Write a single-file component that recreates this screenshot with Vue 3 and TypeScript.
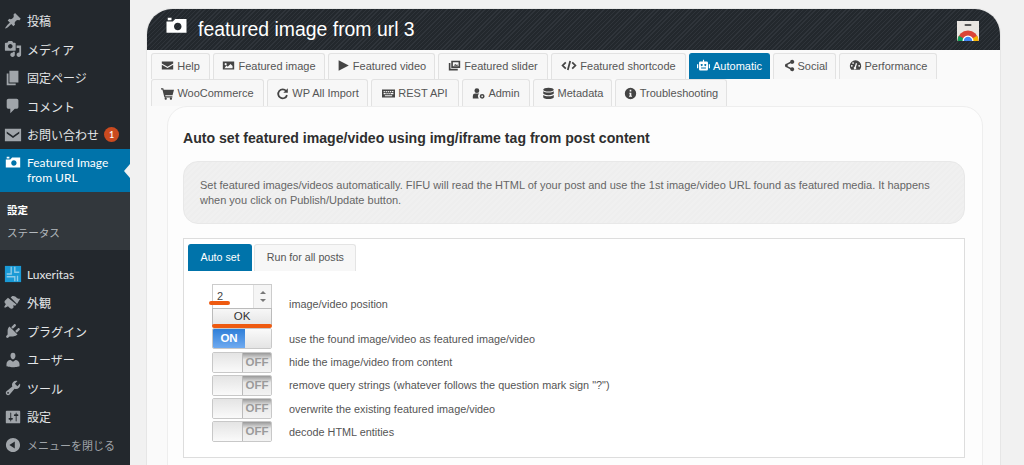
<script setup lang="ts">
interface MenuItem { label: string; icon: string; bold?: boolean }

const wp: Record<string, string> = {
  post: 'M10.44 3.02l1.82-1.82 6.36 6.35-1.83 1.82c-1.05-.68-2.48-.57-3.41.36l-.75.75c-.92.93-1.04 2.35-.35 3.41l-1.83 1.82-2.41-2.41-2.8 2.79c-.42.42-3.38 2.71-3.8 2.29s1.86-3.39 2.28-3.81l2.79-2.79L4.1 9.36l1.83-1.82c1.05.69 2.48.57 3.4-.36l.75-.75c.93-.92 1.05-2.35.36-3.41z',
  media: 'M13 11V4c0-.55-.45-1-1-1h-1.67L9 1H5L3.67 3H2c-.55 0-1 .45-1 1v7c0 .55.45 1 1 1h10c.55 0 1-.45 1-1zM7 4.5c1.38 0 2.5 1.12 2.5 2.5S8.38 9.5 7 9.5 4.5 8.38 4.5 7 5.62 4.5 7 4.5zM14 6h5v10.5c0 1.38-1.12 2.5-2.5 2.5S14 17.88 14 16.5s1.12-2.5 2.5-2.5c.17 0 .34.02.5.05V9h-3V6zm-4 8.05V13h2v3.5c0 1.38-1.12 2.5-2.5 2.5S7 17.88 7 16.5 8.12 14 9.5 14c.17 0 .34.02.5.05z',
  page: 'M6 15V2h10v13H6zm-1 1h8v2H3V5h2v11z',
  comment: 'M5 2h9c1.1 0 2 .9 2 2v7c0 1.1-.9 2-2 2h-2l-5 5v-5H5c-1.1 0-2-.9-2-2V4c0-1.1.9-2 2-2z',
  mail: 'M1 3h18v14H1zM3 6l7 5 7-5v2.400l-7 5-7-5z',
  camera: 'M6 5V3H3v2h3zm12 10V4H9L7 6H2v9h16zm-7-8c1.66 0 3 1.34 3 3s-1.34 3-3 3-3-1.34-3-3 1.34-3 3-3z',
  brush: 'M14.48 11.06 7.41 3.99l1.5-1.5c.5-.56 2.3-.47 3.51.32 1.21.8 1.43 1.28 2.91 2.1.9.5 1.9.4 2.67.3zM13.8 11.7l-1.4 1.4-2.2-.6.6 2.2-1.4 1.400c-1 .5-2 .3-3-.6l-2-2-3.300 1.900-.9-.9 1.900-3.300-1-1c-.5-.6-.7-2.100-.1-2.800l3.400-3.100z',
  plugin: 'M13.11 4.36L9.87 7.6 8 5.73l3.24-3.24c.35-.34 1.05-.2 1.56.32.52.51.66 1.21.31 1.55zm-8 1.77l.91-1.12 9.01 9.01-1.19.84c-.71.71-2.63 1.16-3.82 1.16H6.14L4.9 17.26c-.59.59-1.54.59-2.12 0-.59-.58-.59-1.53 0-2.12l1.24-1.24v-3.88c0-1.13.4-3.19 1.09-3.89zm7.26 3.97l3.24-3.24c.34-.35 1.04-.21 1.55.31.52.51.66 1.21.31 1.55l-3.24 3.25z',
  user: 'M10 9.25c-2.27 0-2.73-3.44-2.73-3.44C7 4.02 7.82 2 9.97 2c2.16 0 2.98 2.02 2.71 3.81 0 0-.41 3.44-2.68 3.44zm0 2.57L12.72 10c2.39 0 4.52 2.33 4.52 4.53v2.49s-3.65 1.13-7.24 1.13c-3.65 0-7.24-1.13-7.24-1.13v-2.49c0-2.25 1.94-4.48 4.47-4.48z',
  tool: 'M16.68 9.77c-1.34 1.34-3.3 1.67-4.95.99l-5.41 6.52c-.99.99-2.59.99-3.58 0s-.99-2.59 0-3.57l6.52-5.42c-.68-1.65-.35-3.61.99-4.95 1.28-1.28 3.12-1.62 4.72-1.06l-2.89 2.89 2.82 2.82 2.86-2.87c.53 1.58.18 3.42-1.08 4.67zM3.81 16.21c.4.39 1.03.39 1.42 0 .4-.4.4-1.03 0-1.43-.39-.39-1.02-.39-1.42 0-.39.4-.39 1.03 0 1.43z',
  settings: 'M18 16V4c0-.55-.45-1-1-1H3c-.55 0-1 .45-1 1v12c0 .55.45 1 1 1h14c.55 0 1-.45 1-1zM8 11h1c.55 0 1 .45 1 1s-.45 1-1 1H8v1.5c0 .28-.22.5-.5.5s-.5-.22-.5-.5V13H6c-.55 0-1-.45-1-1s.45-1 1-1h1V5.500c0-.28.22-.5.5-.5s.5.22.5.5V11zm5-2h-1c-.55 0-1-.45-1-1s.45-1 1-1h1V5.500c0-.28.22-.5.5-.5s.5.22.5.5V7h1c.55 0 1 .45 1 1s-.45 1-1 1h-1v5.500c0 .28-.22.5-.5.5s-.5-.22-.5-.5V9z',
  collapse: 'M10 2.160c4.330 0 7.840 3.510 7.840 7.840S14.330 17.840 10 17.840 2.160 14.330 2.160 10 5.670 2.160 10 2.160zM12 14V6l-6 4z',
}

const fa: Record<string, string> = {
  mail: 'M1 3h14v2.500L8 9.500 1 5.500zM1 7l7 4 7-4v6H1z',
  image: 'M1 3h14v10H1zM4.500 5a1.300 1.300 0 1 0 .01 0zM3 11.500h10V8.500L10.500 6 7 9.500 5.500 8z',
  play: 'M2 1.500 14.500 8 2 14.500z',
  images: 'M4 2h11v9H4zM6 4v5h7V4zM1 5h2v7h9v2H1zM7 8l2-2 1.500 1.500L11.500 6.500 12 8.500z',
  robot: 'M7.300 1h1.400v2H12a1.500 1.500 0 0 1 1.500 1.500v8A1.500 1.500 0 0 1 12 14H4a1.500 1.500 0 0 1-1.500-1.500v-8A1.500 1.500 0 0 1 4 3h3.300zM5.800 6.200a1.200 1.200 0 1 0 .01 0zM10.200 6.200a1.200 1.200 0 1 0 .01 0zM5 10.500v1.200h6v-1.200zM0 6.500h1.500v5H0zM14.500 6.500H16v5h-1.500z',
  share: 'M12.500 1a2.500 2.500 0 1 1-1.800 4.200L6.900 7.200a2.500 2.500 0 0 1 0 1.600l3.800 2A2.500 2.500 0 1 1 10 12.500l-3.900-2a2.500 2.500 0 1 1 0-5l3.900-2A2.500 2.500 0 0 1 12.500 1z',
  gauge: 'M8 1.500a7 7 0 0 1 7 7c0 1.800-.7 3.500-1.800 4.700H2.800A7 7 0 0 1 1 8.500a7 7 0 0 1 7-7zM8.500 5 7 9.600a1.600 1.600 0 1 0 1.500.4L10 5.500zM3.500 7.500a1 1 0 1 0 .01 0zM12.500 7.500a1 1 0 1 0 .01 0zM5 4a1 1 0 1 0 .01 0z',
  cart: 'M0 1.500h2.800l.5 2H16l-1.800 6.500H5.200l.3 1.300h8.500v1.500H4.200L1.700 3H0zM5.800 13a1.400 1.400 0 1 0 .01 0zM12.200 13a1.400 1.400 0 1 0 .01 0z',
  keyboard: 'M0 3h16v10H0zM2 5v1.500h1.500V5zM4.500 5v1.500H6V5zM7 5v1.500h1.500V5zM9.500 5v1.500H11V5zM12 5v1.500h2V5zM2 7.500V9h2.500V7.500zM5.500 7.500V9H7V7.500zM8 7.500V9h1.500V7.500zM10.500 7.500V9H14V7.500zM3.500 10v1.300h9V10z',
  admin: 'M6 1.500a3 3 0 1 1 0 6 3 3 0 0 1 0-6zM1 14v-3a3 3 0 0 1 3-3h4a3 3 0 0 1 .8.100A4.500 4.500 0 0 0 8.300 14zM12.500 8.500a3 3 0 1 1 0 6 3 3 0 0 1 0-6zM12.500 10.500a1 1 0 1 0 .01 0z',
  database: 'M8 1c3.600 0 6.500 1 6.500 2.300S11.600 5.500 8 5.500 1.500 4.600 1.500 3.300 4.400 1 8 1zM1.500 5.200C2.700 6.300 5 6.800 8 6.800s5.300-.5 6.500-1.600v2.600C14.500 9 11.600 10 8 10S1.500 9 1.500 7.800zM1.500 9.800c1.200 1.100 3.500 1.600 6.500 1.600s5.300-.5 6.500-1.600v2.700c0 1.300-2.900 2.300-6.500 2.300s-6.500-1-6.500-2.300z',
  info: 'M8 1a7 7 0 1 1 0 14A7 7 0 0 1 8 1zM7 3.500v2h2v-2zM6.500 7v1.300H7v2.500h-.8V12h3.600v-1.200H9V7z',
}

const topMenu: MenuItem[] = [
  { label: '投稿', icon: 'post' },
  { label: 'メディア', icon: 'media' },
  { label: '固定ページ', icon: 'page' },
  { label: 'コメント', icon: 'comment' },
]
const lowerMenu: MenuItem[] = [
  { label: '外観', icon: 'brush' },
  { label: 'プラグイン', icon: 'plugin' },
  { label: 'ユーザー', icon: 'user' },
  { label: 'ツール', icon: 'tool' },
  { label: '設定', icon: 'settings' },
]

const tabRows = [
  [
    { label: 'Help', icon: 'mail', w: 59 },
    { label: 'Featured image', icon: 'image', w: 112 },
    { label: 'Featured video', icon: 'play', w: 107 },
    { label: 'Featured slider', icon: 'images', w: 110 },
    { label: 'Featured shortcode', icon: 'code', w: 135 },
    { label: 'Automatic', icon: 'robot', w: 81, active: true },
    { label: 'Social', icon: 'share', w: 63 },
    { label: 'Performance', icon: 'gauge', w: 98 },
  ],
  [
    { label: 'WooCommerce', icon: 'cart', w: 113 },
    { label: 'WP All Import', icon: 'redo', w: 101 },
    { label: 'REST API', icon: 'keyboard', w: 88 },
    { label: 'Admin', icon: 'admin', w: 68 },
    { label: 'Metadata', icon: 'database', w: 79 },
    { label: 'Troubleshooting', icon: 'info', w: 112 },
  ],
]

const toggles = [
  { label: 'use the found image/video as featured image/video', on: true },
  { label: 'hide the image/video from content', on: false },
  { label: 'remove query strings (whatever follows the question mark sign "?")', on: false },
  { label: 'overwrite the existing featured image/video', on: false },
  { label: 'decode HTML entities', on: false },
]
</script>

<template>
  <div class="page">
    <aside class="side">
      <ul class="menu">
        <li v-for="m in topMenu" :key="m.label" class="item">
          <svg class="mi" viewBox="0 0 20 20"><path :d="wp[m.icon]" /></svg>
          <span>{{ m.label }}</span>
        </li>
        <li class="item">
          <svg class="mi" viewBox="0 0 20 20"><path fill-rule="evenodd" :d="wp.mail" /></svg>
          <span>お問い合わせ</span>
          <b class="badge">1</b>
        </li>
      </ul>
      <div class="current">
        <svg class="mi" viewBox="0 0 20 20"><path fill-rule="evenodd" :d="wp.camera" /></svg>
        <span>Featured Image<br />from URL</span>
      </div>
      <ul class="sub">
        <li class="sub-head">設定</li>
        <li>ステータス</li>
      </ul>
      <ul class="menu lower">
        <li class="item">
          <svg class="mi" viewBox="0 0 20 20">
            <rect x="1" y="1" width="18" height="18" fill="#1a9ad6" />
            <path d="M8 2v8H3M12 2v6h5M3 13h9v5M15 12v6" fill="none" stroke="#8ecbe8" stroke-width="1.500" />
          </svg>
          <span>Luxeritas</span>
        </li>
        <li v-for="m in lowerMenu" :key="m.label" class="item">
          <svg class="mi" viewBox="0 0 20 20"><path fill-rule="evenodd" :d="wp[m.icon]" /></svg>
          <span>{{ m.label }}</span>
        </li>
        <li class="item close">
          <svg class="mi" viewBox="0 0 20 20"><path fill-rule="evenodd" :d="wp.collapse" /></svg>
          <span>メニューを閉じる</span>
        </li>
      </ul>
    </aside>

    <main class="main">
      <section class="panel">
        <header class="head">
          <svg class="head-icon" viewBox="0 0 20 20"><path fill-rule="evenodd" :d="wp.camera" /></svg>
          <h1>featured image from url 3</h1>
          <svg class="logo" viewBox="0 0 22 20">
            <rect width="22" height="20" fill="#e9e6e2" />
            <rect x="7.500" y="3" width="7" height="2" rx="1" fill="#555" />
            <clipPath id="logo-clip"><rect width="22" height="20" /></clipPath>
            <g clip-path="url(#logo-clip)">
              <circle cx="11" cy="20" r="10.500" fill="#db4437" />
              <path d="M11 20 1.900 14.700A10.500 10.500 0 0 0 .5 20v2H11z" fill="#0f9d58" />
              <path d="M11 20 20.100 14.700A10.500 10.500 0 0 1 21.500 20v2H11z" fill="#f4b400" />
              <circle cx="11" cy="20" r="5.500" fill="#fff" />
              <circle cx="11" cy="20" r="4.200" fill="#4285f4" />
            </g>
          </svg>
        </header>

        <div class="tabs">
          <div v-for="(row, r) in tabRows" :key="r" class="tab-row">
            <div
              v-for="t in row"
              :key="t.label"
              class="tab"
              :class="{ active: t.active }"
              :style="{ width: t.w + 'px' }"
            >
              <svg v-if="t.icon === 'code'" class="ti wide" viewBox="0 0 20 16">
                <path d="M6 4 2 8l4 4M14 4l4 4-4 4M11.500 2.500l-3 11" fill="none" stroke="currentColor" stroke-width="2.200" />
              </svg>
              <svg v-else-if="t.icon === 'redo'" class="ti" viewBox="0 0 16 16">
                <path d="M12.500 5A5.500 5.500 0 1 0 13.500 10" fill="none" stroke="currentColor" stroke-width="2.200" />
                <path d="M14.500 1.500V7H9z" fill="currentColor" />
              </svg>
              <svg v-else class="ti" viewBox="0 0 16 16"><path fill-rule="evenodd" fill="currentColor" :d="fa[t.icon]" /></svg>
              <span>{{ t.label }}</span>
            </div>
          </div>
        </div>

        <div class="card">
          <h2>Auto set featured image/video using img/iframe tag from post content</h2>
          <p class="note">
            Set featured images/videos automatically. FIFU will read the HTML of your post and use the 1st image/video URL found as featured media. It happens when you click on Publish/Update button.
          </p>

          <div class="box">
            <div class="sub-tabs">
              <div class="sub-tab on">Auto set</div>
              <div class="sub-tab">Run for all posts</div>
            </div>

            <div class="rows">
              <div class="row">
                <div class="ctrl">
                  <div class="num">
                    <span class="val">2</span>
                    <span class="spin"><i class="up"></i><i class="down"></i></span>
                    <span class="mark short"></span>
                  </div>
                  <div class="ok">OK<span class="mark long"></span></div>
                </div>
                <span class="lab first">image/video position</span>
              </div>

              <div v-for="t in toggles" :key="t.label" class="row">
                <div class="ctrl">
                  <div class="toggle" :class="t.on ? 'is-on' : 'is-off'">
                    <span v-if="t.on" class="state">ON</span>
                    <span class="knob"></span>
                    <span v-if="!t.on" class="state">OFF</span>
                  </div>
                </div>
                <span class="lab">{{ t.label }}</span>
              </div>
            </div>
          </div>
        </div>
      </section>
    </main>
  </div>
</template>

<style>
html, body { margin: 0; padding: 0; overflow: hidden; }
</style>

<style scoped>
.page {
  display: flex;
  height: 465px;
  overflow: hidden;
  background: #f1f1f1;
  font-family: "Liberation Sans", "Noto Sans CJK JP", sans-serif;
}

/* Sidebar */
.side {
  width: 130px;
  flex: none;
  background: #23282d;
  color: #e4e6e8;
  font-size: 12px;
  font-family: Lato, "Noto Sans CJK JP", sans-serif;
}
.menu, .sub { list-style: none; margin: 0; padding: 0; }
.menu { padding-top: 6.750px; }
.menu.lower { padding-top: 10px; }
.item {
  display: flex;
  align-items: center;
  height: 28.500px;
  box-sizing: border-box;
  padding: 0 0 1px 4px;
  gap: 5px;
  white-space: nowrap;
}
.mi { width: 18px; height: 18px; flex: none; fill: #a0a5aa; }
.badge {
  width: 15px;
  height: 15px;
  border-radius: 50%;
  background: #ca4a1f;
  color: #fff;
  font-size: 9px;
  line-height: 15px;
  text-align: center;
  font-weight: 600;
}
.close { color: #a0a5aa; font-size: 11px; }
.current {
  position: relative;
  display: flex;
  gap: 5px;
  height: 43px;
  box-sizing: border-box;
  padding: 6px 0 0 4px;
  background: #0073aa;
  color: #fff;
  line-height: 15px;
}
.current .mi { fill: #fff; margin-top: -1px; }
.current::after {
  content: "";
  position: absolute;
  right: 0;
  top: 15px;
  border: 7px solid transparent;
  border-left: 0;
  border-right: 6px solid #f1f1f1;
}
.sub {
  height: 58px;
  box-sizing: border-box;
  padding: 10px 0 0 7px;
  background: #32373c;
  color: #b4b9be;
  font-size: 10.600px;
  line-height: 23px;
}
.sub-head { color: #fff; font-weight: 700; font-size: 10.500px; line-height: 17px; margin-bottom: 3px; }

/* Main */
.main { flex: 1; min-width: 0; padding: 9px 24px 0 17px; }
.panel {
  height: 100%;
  background: #fafafa;
  box-shadow: 0 0 0 1px #e6e6e6;
  border-radius: 25px 25px 0 0;
}
.head {
  height: 41px;
  display: flex;
  align-items: center;
  padding: 0 21px 0 17px;
  border-radius: 25px 25px 0 0;
  background: repeating-linear-gradient(135deg, #23282d 0 2px, #2f343a 2px 3px);
  color: #fff;
}
.head-icon { width: 25px; height: 25px; fill: #fff; flex: none; margin: -6px 9px 0 0; }
.head h1 { margin: 0; flex: 1; font-size: 19.400px; font-weight: 400; font-family: "Liberation Sans", sans-serif; }
.logo { width: 22px; height: 20px; flex: none; margin-top: 2px; }

.tabs { padding: 3px 0 0 4px; }
.tab-row { display: flex; gap: 3px; }
.tab {
  height: 26px;
  box-sizing: border-box;
  display: flex;
  align-items: center;
  justify-content: center;
  gap: 3px;
  background: #f7f7f7;
  border: 1px solid #e2e2e2;
  border-bottom: 0;
  border-radius: 3px 3px 0 0;
  color: #555;
  font-size: 11px;
  white-space: nowrap;
}
.tab-row:first-child .tab { padding-bottom: 2px; }
.tab-row + .tab-row .tab { height: 27px; }
.tab.active { background: #0073aa; border-color: #0073aa; color: #fff; }
.ti { width: 13px; height: 13px; flex: none; color: #444; }
.ti.wide { width: 16px; }
.active .ti { color: #fff; }

.card {
  margin: 0 17px 0 20px;
  padding: 22px 17px 0 15px;
  height: 400px;
  background: #fdfdfd;
  border: 1px solid #eee;
  border-radius: 20px 20px 0 0;
}
.card h2 { margin: 0; font-size: 14.100px; line-height: 18px; color: #2f2f2f; font-weight: 700; }
.note {
  margin: 14px 0 0;
  height: 63px;
  box-sizing: border-box;
  padding: 16px 30px 0 16px;
  border: 1px solid #e8e8e8;
  border-radius: 15px;
  background: repeating-linear-gradient(135deg, #f0f0f0 0 2px, #eeeeee 2px 4px);
  color: #666;
  font-size: 11px;
  line-height: 14.500px;
}
.box {
  margin-top: 14px;
  height: 220px;
  box-sizing: border-box;
  padding: 5px 4px 0;
  background: #fff;
  border: 1px solid #ddd;
}
.sub-tabs { display: flex; gap: 2px; }
.sub-tab {
  height: 27px;
  box-sizing: border-box;
  padding: 0 11.500px 2px;
  display: flex;
  align-items: center;
  background: #f7f7f7;
  border: 1px solid #e4e4e4;
  border-bottom: 0;
  border-radius: 3px 3px 0 0;
  color: #555;
  font-size: 10.700px;
}
.sub-tab.on { background: #0073aa; border-color: #0073aa; color: #fff; }

.rows { display: flex; flex-direction: column; gap: 2.250px; padding: 13px 0 0 24px; }
.row { display: flex; align-items: center; gap: 17px; }
.ctrl { width: 60px; flex: none; }
.lab { font-size: 10.850px; color: #555; white-space: nowrap; }
.lab.first { margin-bottom: 3px; }

.num {
  position: relative;
  height: 24px;
  box-sizing: border-box;
  display: flex;
  background: #fff;
  border: 1px solid #ccc;
  border-bottom: 0;
}
.val { flex: 1; font-size: 11px; color: #444; padding: 5px 0 0 4px; }
.spin {
  width: 17px;
  display: flex;
  flex-direction: column;
  align-items: center;
  justify-content: center;
  gap: 5px;
  background: #f5f5f5;
  border-left: 1px solid #e2e2e2;
}
.up { border: 3px solid transparent; border-top: 0; border-bottom: 3px solid #777; }
.down { border: 3px solid transparent; border-bottom: 0; border-top: 3px solid #777; }

.ok {
  position: relative;
  height: 18px;
  box-sizing: border-box;
  text-align: center;
  font-size: 11.500px;
  line-height: 15px;
  color: #333;
  background: linear-gradient(#f7f7f7, #e4e4e4);
  border: 1px solid #bbb;
  border-bottom: 0;
}
.mark { position: absolute; background: #ee5a10; border-radius: 3px; height: 4px; }
.mark.short { left: -4px; bottom: 3px; width: 21px; }
.mark.long { left: -1px; right: -1px; bottom: -2px; }

.toggle {
  display: flex;
  width: 60px;
  height: 21px;
  box-sizing: border-box;
  border: 1px solid #c8c8c8;
  border-radius: 2px;
  overflow: hidden;
  font-size: 11.500px;
  font-weight: 700;
  line-height: 19px;
}
.is-on .state { flex: none; width: 32px; text-align: center; color: #fff; background: linear-gradient(#2f7fd8, #6faaf0); }
.is-on .knob { flex: 1; background: linear-gradient(#fafafa, #e4e4e4); }
.is-off .knob { flex: none; width: 29px; background: linear-gradient(#e4e4e4, #fafafa); border-right: 1px solid #bbb; }
.is-off .state { flex: 1; text-align: center; color: #9a9a9a; background: linear-gradient(#999 0, #e8e8e8 35%, #f3f3f3); }
</style>
